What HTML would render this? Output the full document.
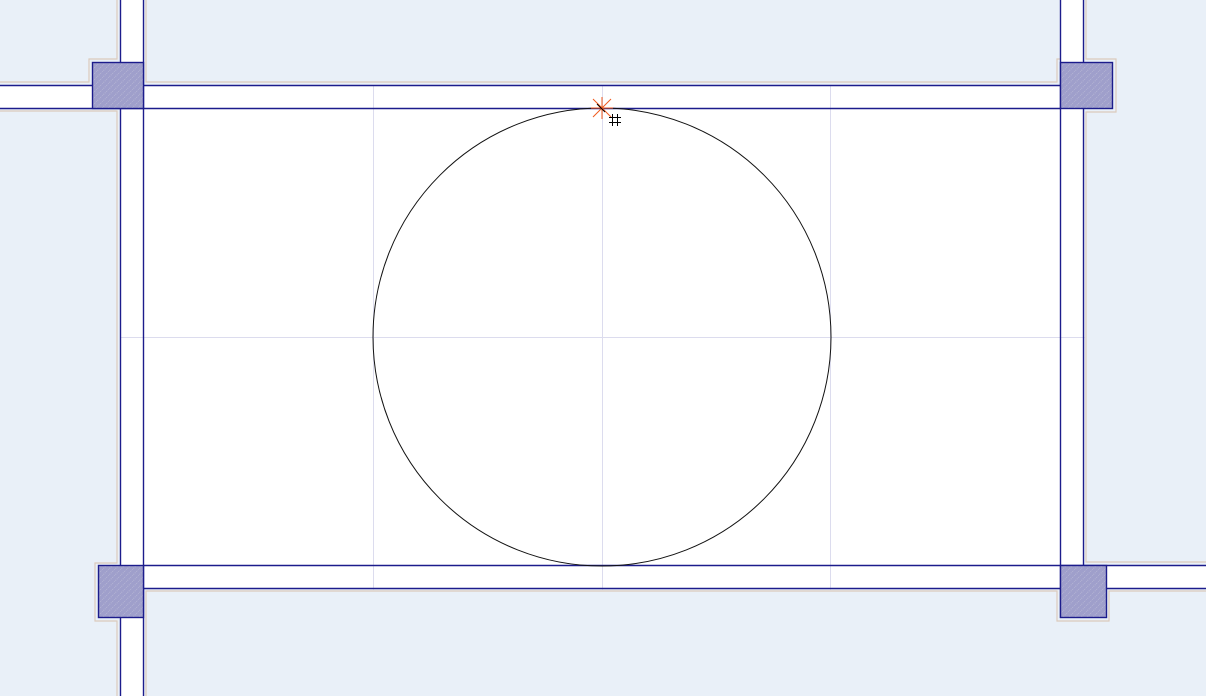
<!DOCTYPE html>
<html><head><style>html,body{margin:0;padding:0;background:#e9f0f8;overflow:hidden}svg{display:block}</style></head>
<body>
<svg width="1206" height="696" viewBox="0 0 1206 696" xmlns="http://www.w3.org/2000/svg">
<defs>
<pattern id="h" width="6" height="6" patternUnits="userSpaceOnUse">
<rect width="6" height="6" fill="#9f9fcb"/>
<path d="M0 6L6 0" stroke="#b4b4d4" stroke-width="1" stroke-dasharray="1 1"/>
</pattern>
</defs>
<rect width="1206" height="696" fill="#e9f0f8"/>
<g fill="none" stroke="#dccabc" stroke-width="1.2">
<path d="M0 82H89V59H117V0"/>
<path d="M146 0V82H1057V59H1083V0"/>
<path d="M1086 0V59H1116V112H1086V562H1206"/>
<path d="M0 111H117V563H95V621H117V696"/>
<path d="M146 696V591H1057V621H1109V591H1206"/>
</g>
<g fill="#fff">
<rect x="0" y="85" width="1060" height="23"/>
<rect x="120" y="0" width="23" height="696"/>
<rect x="1060" y="0" width="23" height="618"/>
<rect x="143" y="565" width="1063" height="23"/>
<rect x="143" y="108" width="917" height="457"/>
</g>
<g stroke="#dcdcee" stroke-width="1">
<path d="M373.5 85V590M602.5 85V590M830.5 85V590M120 337.5H1085"/>
</g>
<g stroke="#1c1c8c" stroke-width="1.4" fill="none">
<path d="M0 85.5H1060M0 108.5H1060"/>
<path d="M120.5 0V696M143.5 0V696"/>
<path d="M1060.5 0V618M1083.5 0V618"/>
<path d="M143 565.5H1206M143 588.5H1206"/>
</g>
<g fill="url(#h)" stroke="#1c1c8c" stroke-width="1.4">
<rect x="92.5" y="62.5" width="51" height="46"/>
<rect x="1060.5" y="62.5" width="52" height="46"/>
<rect x="98.5" y="565.5" width="45" height="52"/>
<rect x="1060.5" y="565.5" width="46" height="52"/>
</g>
<circle cx="602" cy="337" r="229" fill="none" stroke="#111" stroke-width="1"/>
<g stroke="#f05a1e" stroke-width="1">
<path d="M593 99L611 117M611 99L593 117M602 97V119M591 108H613"/>
</g>
<g stroke="#000" stroke-width="1">
<path d="M597 104L605 112"/>
<path d="M612.5 114V126M617.5 114V126M609 117.5H621M609 122.5H621"/>
</g>
</svg>
</body></html>
